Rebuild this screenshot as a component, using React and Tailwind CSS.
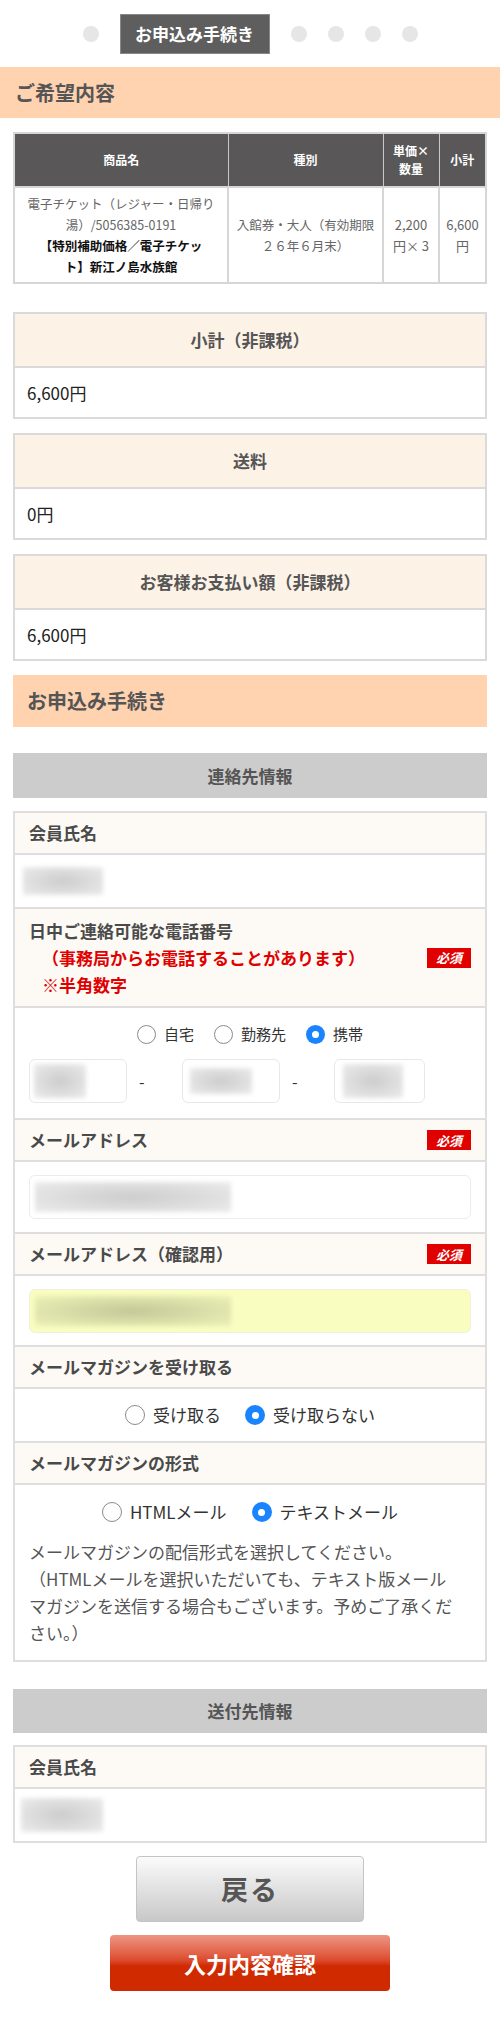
import React from "react";

function Blur({ className = "" }) {
  return <div className={"bg-radial from-[#cdcdcd] to-[#ececec] blur-[2px] " + className} />;
}

function Radio({ checked, size = "w-5 h-5" }) {
  return checked ? (
    <span className={size + " rounded-full bg-[#1a84ff] flex items-center justify-center shrink-0"}>
      <span className="w-[7px] h-[7px] rounded-full bg-white" />
    </span>
  ) : (
    <span className={size + " rounded-full border-[1.5px] border-[#8a8a8a] bg-white shrink-0"} />
  );
}

function Badge() {
  return (
    <span className="bg-[#e00000] text-white text-[13px] font-bold italic leading-none w-[44px] h-[20px] flex items-center justify-center">
      必須
    </span>
  );
}

function LabelRow({ children, badge, first }) {
  return (
    <div
      className={
        "bg-[#fdfaf5] px-[14px] flex items-center justify-between " +
        (first ? "h-[40px]" : "h-[42px] border-t-2 border-[#dedede]")
      }
    >
      <span className="text-[17px] font-bold text-[#4a4a4a]">{children}</span>
      {badge && <Badge />}
    </div>
  );
}

function SumBox({ title, value }) {
  return (
    <div className="border-2 border-[#dadada]">
      <div className="bg-[#fdf2e6] h-[52px] flex items-center justify-center text-[17px] font-bold text-[#555]">
        {title}
      </div>
      <div className="border-t-2 border-[#dadada] h-[51px] flex items-center px-[12px] text-[17px] text-[#222]">
        {value}
      </div>
    </div>
  );
}

export default function App() {
  return (
    <div className="w-[500px] bg-white font-['Noto_Sans_CJK_JP',sans-serif] text-[#444]">
      {/* step nav */}
      <div className="h-[67px] flex items-center justify-center gap-[21px]">
        <span className="w-4 h-4 rounded-full bg-[#e6e6e6]" />
        <div className="w-[150px] h-[40px] bg-[#5e5e5e] border border-[#888] flex items-center justify-center text-white text-[17px] font-bold">
          お申込み手続き
        </div>
        <span className="w-4 h-4 rounded-full bg-[#e6e6e6]" />
        <span className="w-4 h-4 rounded-full bg-[#e6e6e6]" />
        <span className="w-4 h-4 rounded-full bg-[#e6e6e6]" />
        <span className="w-4 h-4 rounded-full bg-[#e6e6e6]" />
      </div>

      <div className="h-[51px] bg-[#ffd2b0] flex items-center px-[15px] text-[20px] font-bold text-[#555]">
        ご希望内容
      </div>

      <div className="px-[13px]">
        <table className="w-full mt-[14px] border-collapse border-2 border-[#d6d6d6] text-center">
          <thead>
            <tr className="h-[54px] bg-[#595757] text-white text-[12px] font-bold leading-[18px]">
              <th className="w-[214px] border border-[#c8c8c8]">商品名</th>
              <th className="w-[155px] border border-[#c8c8c8]">種別</th>
              <th className="w-[56px] border border-[#c8c8c8]">
                単価×
                <br />
                数量
              </th>
              <th className="border border-[#c8c8c8]">小計</th>
            </tr>
          </thead>
          <tbody>
            <tr className="h-[96px] text-[12.5px] leading-[21px] text-[#666]">
              <td className="border-2 border-[#d6d6d6]">
                電子チケット（レジャー・日帰り
                <br />
                湯）/5056385-0191
                <br />
                <span className="font-bold text-[#111]">
                  【特別補助価格／電子チケッ
                  <br />
                  ト】新江ノ島水族館
                </span>
              </td>
              <td className="border-2 border-[#d6d6d6]">
                入館券・大人（有効期限
                <br />
                ２６年６月末）
              </td>
              <td className="border-2 border-[#d6d6d6] text-[13px]">
                2,200
                <br />
                円× 3
              </td>
              <td className="border-2 border-[#d6d6d6] text-[13px]">
                6,600
                <br />円
              </td>
            </tr>
          </tbody>
        </table>

        <div className="mt-[28px] flex flex-col gap-[14px]">
          <SumBox title="小計（非課税）" value="6,600円" />
          <SumBox title="送料" value="0円" />
          <SumBox title="お客様お支払い額（非課税）" value="6,600円" />
        </div>

        <div className="mt-[14px] h-[52px] bg-[#ffd2b0] flex items-center px-[14px] text-[20px] font-bold text-[#555]">
          お申込み手続き
        </div>

        <div className="mt-[26px] h-[45px] bg-[#cccccc] flex items-center justify-center text-[17px] font-bold text-[#555]">
          連絡先情報
        </div>

        {/* contact form */}
        <div className="mt-[13px] border-2 border-[#dedede]">
          <LabelRow first>会員氏名</LabelRow>
          <div className="border-t-2 border-[#dedede] h-[54px] flex items-center px-[8px]">
            <Blur className="w-[80px] h-[28px]" />
          </div>

          <div className="border-t-2 border-[#dedede] bg-[#fdfaf5] px-[14px] py-[8px] flex items-center justify-between">
            <div className="text-[17px] font-bold leading-[27px]">
              <div className="text-[#4a4a4a]">日中ご連絡可能な電話番号</div>
              <div className="text-[#e00000] pl-[13px]">（事務局からお電話することがあります）</div>
              <div className="text-[#e00000] pl-[13px]">※半角数字</div>
            </div>
            <Badge />
          </div>

          <div className="border-t-2 border-[#dedede] pt-[16px] pb-[15px] px-[14px]">
            <div className="flex items-center justify-center text-[15px] text-[#333] gap-[8px] h-[20px]">
              <Radio size="w-[19px] h-[19px]" />
              <span className="mr-[12px]">自宅</span>
              <Radio size="w-[19px] h-[19px]" />
              <span className="mr-[12px]">勤務先</span>
              <Radio checked size="w-[19px] h-[19px]" />
              <span>携帯</span>
            </div>
            <div className="mt-[15px] flex items-center">
              <div className="w-[98px] h-[44px] border border-[#e8e8e8] rounded-md flex items-center px-[4px]">
                <Blur className="w-[52px] h-[34px]" />
              </div>
              <span className="w-[55px] pl-[12px] text-left text-[16px] text-[#333]">-</span>
              <div className="w-[98px] h-[44px] border border-[#e8e8e8] rounded-md flex items-center px-[7px]">
                <Blur className="w-[62px] h-[26px]" />
              </div>
              <span className="w-[54px] pl-[12px] text-left text-[16px] text-[#333]">-</span>
              <div className="w-[91px] h-[44px] border border-[#e8e8e8] rounded-md flex items-center px-[8px]">
                <Blur className="w-[60px] h-[34px]" />
              </div>
            </div>
          </div>

          <LabelRow badge>メールアドレス</LabelRow>
          <div className="border-t-2 border-[#dedede] h-[72px] flex items-center px-[14px]">
            <div className="w-full h-[44px] border border-[#ececec] rounded-md flex items-center px-[5px]">
              <Blur className="w-[196px] h-[30px]" />
            </div>
          </div>

          <LabelRow badge>メールアドレス（確認用）</LabelRow>
          <div className="border-t-2 border-[#dedede] h-[71px] flex items-center px-[14px]">
            <div className="w-full h-[44px] border border-[#f0f0e0] bg-[#f9fdc0] rounded-md flex items-center px-[5px]">
              <div className="w-[196px] h-[30px] bg-radial from-[#c4c898] to-[#eef2b8] blur-[2px]" />
            </div>
          </div>

          <LabelRow>メールマガジンを受け取る</LabelRow>
          <div className="border-t-2 border-[#dedede] h-[54px] flex items-center justify-center gap-[8px] text-[17px] text-[#333]">
            <Radio />
            <span className="mr-[16px]">受け取る</span>
            <Radio checked />
            <span>受け取らない</span>
          </div>

          <LabelRow>メールマガジンの形式</LabelRow>
          <div className="border-t-2 border-[#dedede] px-[14px] pt-[16px] pb-[14px]">
            <div className="flex items-center justify-center gap-[8px] text-[17px] text-[#333] h-[22px]">
              <Radio />
              <span className="mr-[17px]">HTMLメール</span>
              <Radio checked />
              <span>テキストメール</span>
            </div>
            <p className="mt-[15px] text-[17px] leading-[27px] text-[#555] whitespace-nowrap">
              メールマガジンの配信形式を選択してください。
              <br />
              （HTMLメールを選択いただいても、テキスト版メール
              <br />
              マガジンを送信する場合もございます。予めご了承くだ
              <br />
              さい。）
            </p>
          </div>
        </div>

        <div className="mt-[27px] h-[44px] bg-[#cccccc] flex items-center justify-center text-[17px] font-bold text-[#555]">
          送付先情報
        </div>

        <div className="mt-[12px] border-2 border-[#dedede]">
          <LabelRow first>会員氏名</LabelRow>
          <div className="border-t-2 border-[#dedede] h-[54px] flex items-center px-[6px]">
            <Blur className="w-[82px] h-[34px]" />
          </div>
        </div>

        <div className="mt-[13px] flex flex-col items-center gap-[13px] pb-[31px]">
          <button className="w-[228px] h-[66px] rounded-[4px] border border-[#c4c4c4] bg-linear-to-b from-[#fbfbfb] to-[#c8c8c8] text-[27px] font-bold text-[#555] tracking-[2px]">
            戻る
          </button>
          <button className="w-[280px] h-[56px] rounded-[4px] bg-linear-to-b from-[#ec9483] from-0% via-[#dc4b2c] via-45% to-[#d02a00] to-55% text-[22px] font-bold text-white">
            入力内容確認
          </button>
        </div>
      </div>
    </div>
  );
}
